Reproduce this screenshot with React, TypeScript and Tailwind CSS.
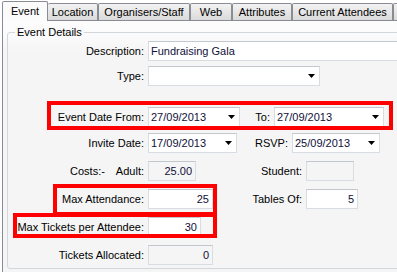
import type { ReactNode } from "react";

// Win7-style "Event" property page with red annotation boxes on top.

const tabs = [
  { label: "Location", w: "w-[50px]" },
  { label: "Organisers/Staff", w: "w-[92px]" },
  { label: "Web", w: "w-[42px]" },
  { label: "Attributes", w: "w-[60px]" },
  { label: "Current Attendees", w: "w-[101px]" },
  { label: "", w: "w-[60px]" },
];

function Arrow() {
  return (
    <svg width="7" height="4" viewBox="0 0 7 4" aria-hidden="true" className="shrink-0">
      <polygon points="0,0 7,0 3.5,4" fill="#000" />
    </svg>
  );
}

type BoxProps = {
  w: string;
  value?: string;
  align?: "left" | "right";
  readOnly?: boolean;
  combo?: boolean;
};

function Box({ w, value = "", align = "left", readOnly, combo }: BoxProps) {
  return (
    <div
      className={`${w} h-[20px] shrink-0 flex items-center border border-[#d8dce3] border-t-[#c3c7ce] ${
        readOnly ? "bg-transparent" : "bg-white"
      } ${combo ? "justify-between pl-[2px] pr-[4px]" : align === "right" ? "justify-end pr-[3px]" : "pl-[2px]"}`}
    >
      <span className="leading-[18px] text-[#10103a] whitespace-nowrap">{value}</span>
      {combo && <Arrow />}
    </div>
  );
}

function Row({ label, mt, children }: { label: ReactNode; mt: string; children: ReactNode }) {
  return (
    <div className={`flex items-center h-[20px] ${mt}`}>
      <div className="w-[136px] shrink-0 flex justify-end whitespace-nowrap">{label}</div>
      <div className="ml-[4px] flex items-center">{children}</div>
    </div>
  );
}

function SideLabel({ w, text }: { w: string; text: string }) {
  return <div className={`${w} shrink-0 text-right mr-[4px] whitespace-nowrap`}>{text}</div>;
}

export default function App() {
  return (
    <div className="relative w-[397px] h-[272px] overflow-hidden bg-white text-[11px] text-black font-['Liberation_Sans',Arial,sans-serif]">
      {/* Tab strip */}
      <div className="relative z-10 flex items-end h-[21px] -mb-[1px] pl-[2px]">
        <div className="w-[46px] h-[20px] shrink-0 flex items-center justify-center border border-b-0 border-[#898c95] rounded-t-[2px] bg-[#fbfbfb]">
          <span className="leading-[14px] -mt-[2px]">Event</span>
        </div>
        {tabs.map((t, i) => (
          <div
            key={i}
            className={`${t.w} h-[17px] mb-[1px] shrink-0 flex items-center justify-center border border-b-0 border-[#898c95] rounded-t-[2px] bg-linear-to-b from-[#f3f3f3] to-[#dadada] ${
              i === 0 ? "border-l-0" : ""
            }`}
          >
            <span className="leading-[14px] whitespace-nowrap">{t.label}</span>
          </div>
        ))}
      </div>

      {/* Tab page */}
      <div className="ml-[2px] w-[440px] h-[260px] border border-[#898c95] bg-linear-to-b from-[#fcfcfc] from-[4%] to-[#f5f5f5] to-[12%] pl-[4px] pt-[11px]">
        {/* Group box */}
        <div className="relative w-[420px] border border-[#d2d7dc] rounded-[3px] pt-[8px] pb-[3px]">
          <span className="absolute left-[7px] -top-[7px] px-[2px] leading-[13px] bg-[#fafafa]">Event Details</span>
          <div className="flex flex-col">
            <Row label="Description:" mt="mt-0">
              <Box w="w-[260px]" value="Fundraising Gala" />
            </Row>
            <Row label="Type:" mt="mt-[5px]">
              <Box w="w-[172px]" combo />
            </Row>
            <Row label="Event Date From:" mt="mt-[21px]">
              <Box w="w-[92px]" value="27/09/2013" combo />
              <SideLabel w="w-[30px]" text="To:" />
              <Box w="w-[110px]" value="27/09/2013" combo />
            </Row>
            <Row label="Invite Date:" mt="mt-[6px]">
              <Box w="w-[89px]" value="17/09/2013" combo />
              <SideLabel w="w-[51px]" text="RSVP:" />
              <Box w="w-[88px]" value="25/09/2013" combo />
            </Row>
            <Row
              label={
                <>
                  <span>Costs:-</span>
                  <span className="ml-[11px]">Adult:</span>
                </>
              }
              mt="mt-[8px]"
            >
              <Box w="w-[48px]" value="25.00" align="right" readOnly />
              <SideLabel w="w-[106px]" text="Student:" />
              <Box w="w-[48px]" readOnly />
            </Row>
            <Row label="Max Attendance:" mt="mt-[8px]">
              <Box w="w-[65px]" value="25" align="right" />
              <SideLabel w="w-[89px]" text="Tables Of:" />
              <Box w="w-[52px]" value="5" align="right" />
            </Row>
            <Row label="Max Tickets per Attendee:" mt="mt-[8px]">
              <Box w="w-[53px]" value="30" align="right" />
            </Row>
            <Row label="Tickets Allocated:" mt="mt-[8px]">
              <Box w="w-[65px]" value="0" align="right" readOnly />
            </Row>
          </div>
        </div>
      </div>

      {/* Red annotation boxes drawn over the form */}
      <div className="absolute left-[47px] top-[101px] w-[346px] h-[29px] border-[4px] border-[#ff0000] pointer-events-none" />
      <div className="absolute left-[53px] top-[184px] w-[164px] h-[32px] border-[4px] border-[#ff0000] pointer-events-none" />
      <div className="absolute left-[13px] top-[213px] w-[204px] h-[25px] border-[4px] border-[#ff0000] pointer-events-none" />
    </div>
  );
}
